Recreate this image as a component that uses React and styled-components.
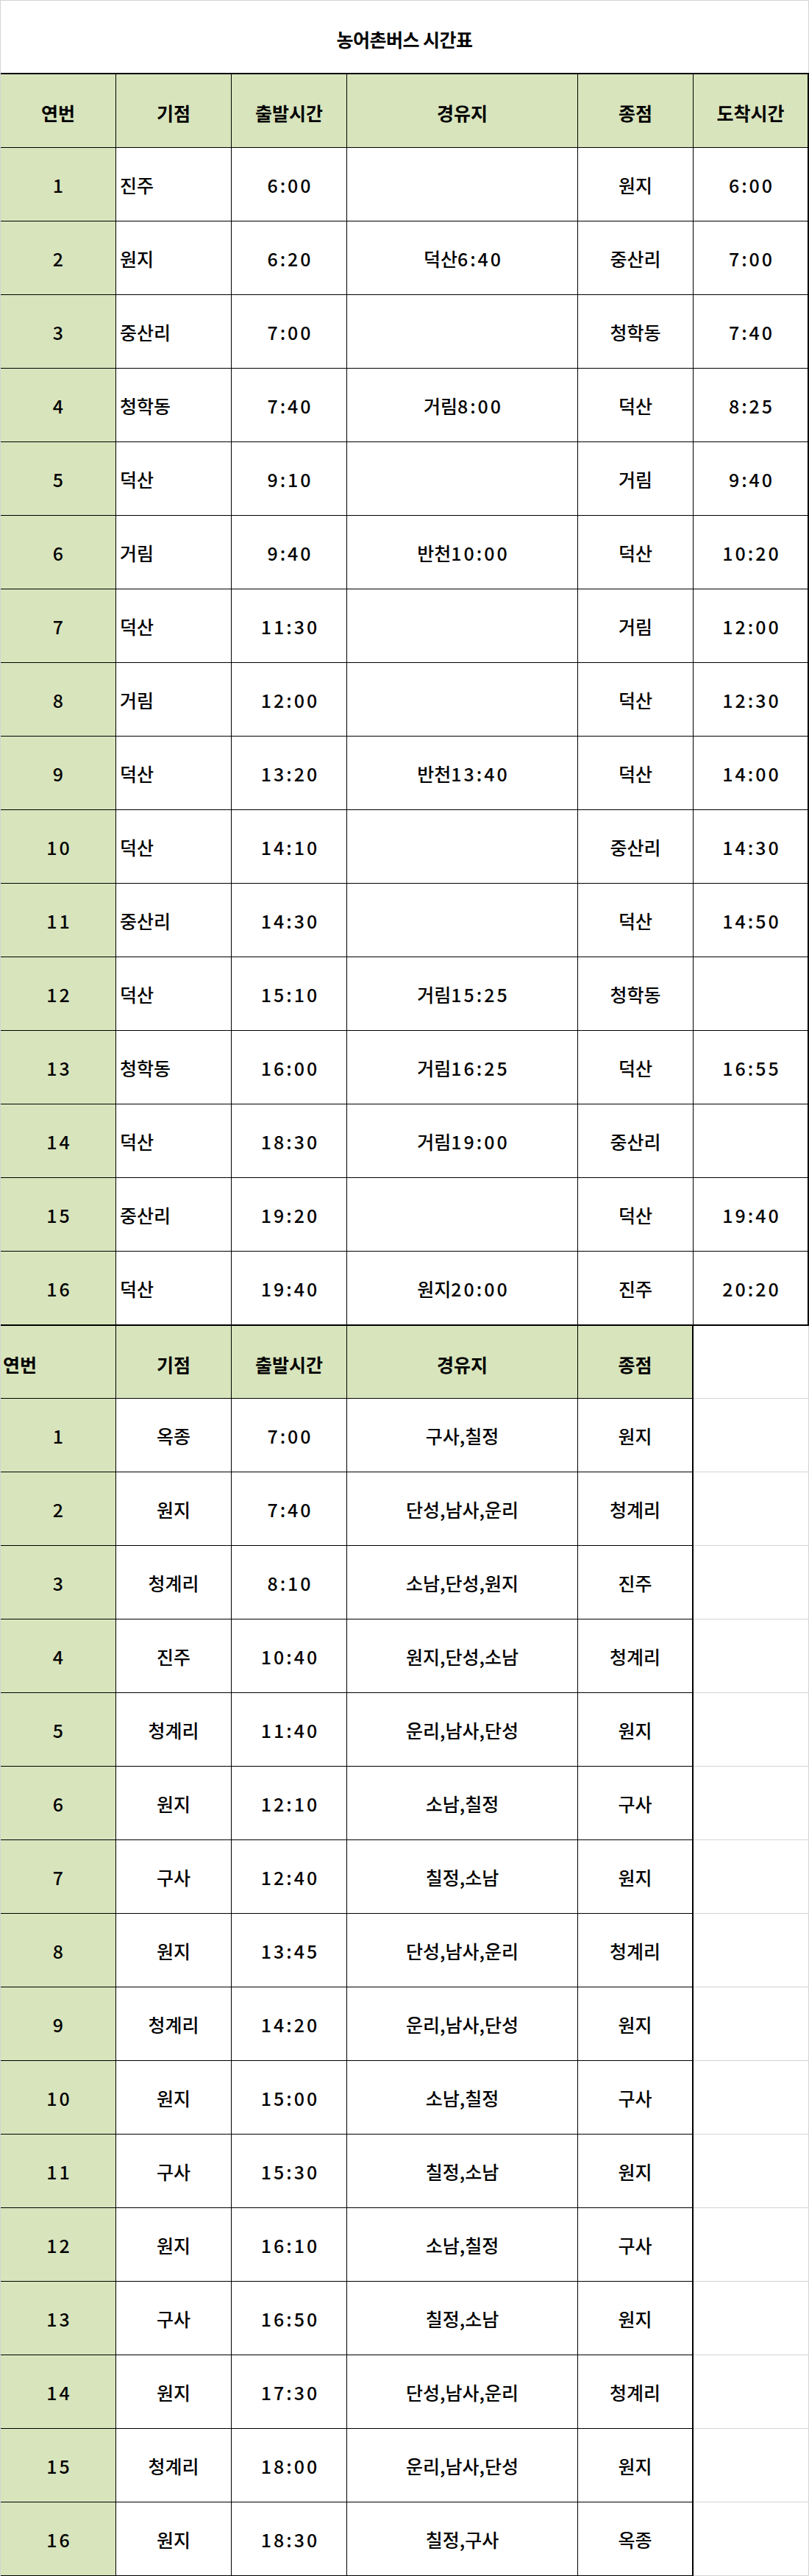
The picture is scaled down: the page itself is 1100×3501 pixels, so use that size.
import styled, { createGlobalStyle } from "styled-components";

const GlobalStyle = createGlobalStyle`
  html, body {
    margin: 0;
    padding: 0;
    background: #fff;
  }
  body {
    font-family: "Noto Sans CJK KR", "Noto Sans", sans-serif;
    color: #000;
  }
  * {
    box-sizing: border-box;
  }
`;

const GRID = "#d4d4d4";
const GREEN = "#d8e4bc";

const firstHead = ["연번", "기점", "출발시간", "경유지", "종점", "도착시간"];
const secondHead = ["연번", "기점", "출발시간", "경유지", "종점"];

const firstRows = [
  ["진주", "6:00", "", "원지", "6:00"],
  ["원지", "6:20", "덕산6:40", "중산리", "7:00"],
  ["중산리", "7:00", "", "청학동", "7:40"],
  ["청학동", "7:40", "거림8:00", "덕산", "8:25"],
  ["덕산", "9:10", "", "거림", "9:40"],
  ["거림", "9:40", "반천10:00", "덕산", "10:20"],
  ["덕산", "11:30", "", "거림", "12:00"],
  ["거림", "12:00", "", "덕산", "12:30"],
  ["덕산", "13:20", "반천13:40", "덕산", "14:00"],
  ["덕산", "14:10", "", "중산리", "14:30"],
  ["중산리", "14:30", "", "덕산", "14:50"],
  ["덕산", "15:10", "거림15:25", "청학동", ""],
  ["청학동", "16:00", "거림16:25", "덕산", "16:55"],
  ["덕산", "18:30", "거림19:00", "중산리", ""],
  ["중산리", "19:20", "", "덕산", "19:40"],
  ["덕산", "19:40", "원지20:00", "진주", "20:20"],
];

const secondRows = [
  ["옥종", "7:00", "구사,칠정", "원지"],
  ["원지", "7:40", "단성,남사,운리", "청계리"],
  ["청계리", "8:10", "소남,단성,원지", "진주"],
  ["진주", "10:40", "원지,단성,소남", "청계리"],
  ["청계리", "11:40", "운리,남사,단성", "원지"],
  ["원지", "12:10", "소남,칠정", "구사"],
  ["구사", "12:40", "칠정,소남", "원지"],
  ["원지", "13:45", "단성,남사,운리", "청계리"],
  ["청계리", "14:20", "운리,남사,단성", "원지"],
  ["원지", "15:00", "소남,칠정", "구사"],
  ["구사", "15:30", "칠정,소남", "원지"],
  ["원지", "16:10", "소남,칠정", "구사"],
  ["구사", "16:50", "칠정,소남", "원지"],
  ["원지", "17:30", "단성,남사,운리", "청계리"],
  ["청계리", "18:00", "운리,남사,단성", "원지"],
  ["원지", "18:30", "칠정,구사", "옥종"],
];

// digits in the sheet font run wider than Noto's, so space them out a bit
function withNumbers(text) {
  return String(text)
    .split(/(\d[\d:]*)/)
    .filter(Boolean)
    .map((part, i) =>
      /^\d/.test(part) ? <Num key={i}>{part}</Num> : <span key={i}>{part}</span>
    );
}

function App() {
  return (
    <>
      <GlobalStyle />
      <Sheet>
        <Title>농어촌버스 시간표</Title>

        <Grid>
          {firstHead.map((h, i) => (
            <Cell key={h} $head $topThick $rightThick={i === 5}>
              {h}
            </Cell>
          ))}
          {firstRows.map((row, r) => {
            const last = r === firstRows.length - 1;
            return [
              <Cell key={`n${r}`} $green $bottomThick={last}>
                {withNumbers(r + 1)}
              </Cell>,
              ...row.map((v, c) => (
                <Cell
                  key={`${r}-${c}`}
                  $align={c === 0 ? "left" : "center"}
                  $rightThick={c === 4}
                  $bottomThick={last}
                >
                  {withNumbers(v)}
                </Cell>
              )),
            ];
          })}
        </Grid>

        <Grid>
          {secondHead.map((h, i) => (
            <Cell
              key={h}
              $head
              $short
              $align={i === 0 ? "flush" : "center"}
              $rightThick={i === 4}
            >
              {h}
            </Cell>
          ))}
          <Blank $short />
          {secondRows.map((row, r) => {
            const last = r === secondRows.length - 1;
            return [
              <Cell key={`n${r}`} $green $bottomThick={last}>
                {withNumbers(r + 1)}
              </Cell>,
              ...row.map((v, c) => (
                <Cell key={`${r}-${c}`} $rightThick={c === 3} $bottomThick={last}>
                  {withNumbers(v)}
                </Cell>
              )),
              <Blank key={`b${r}`} />,
            ];
          })}
        </Grid>
      </Sheet>
    </>
  );
}

const Sheet = styled.div`
  width: 1100px;
  border-left: 1px solid ${GRID};
  border-top: 1px solid ${GRID};
`;

const Title = styled.div`
  height: 98px;
  display: flex;
  align-items: center;
  justify-content: center;
  padding-top: 6px;
  border-right: 1px solid ${GRID};
  font-size: 25px;
  font-weight: 700;
  letter-spacing: -0.5px;
`;

const Grid = styled.div`
  display: grid;
  grid-template-columns: 157px 157px 157px 314px 157px 157px;
`;

const Cell = styled.div`
  height: ${(p) => (p.$topThick ? 102 : p.$bottomThick ? 101 : p.$short ? 99 : 100)}px;
  display: flex;
  align-items: center;
  justify-content: ${(p) => (p.$align === "left" || p.$align === "flush" ? "flex-start" : "center")};
  padding-left: ${(p) => (p.$align === "left" ? 5 : p.$align === "flush" ? 3 : 0)}px;
  padding-top: ${(p) => (p.$head ? 5 : 1)}px;
  background: ${(p) => (p.$head || p.$green ? GREEN : "#fff")};
  border-top: ${(p) => (p.$topThick ? "2px solid #000" : "none")};
  border-right: ${(p) => (p.$rightThick ? 2 : 1)}px solid #000;
  border-bottom: ${(p) => (p.$bottomThick ? 2 : 1)}px solid #000;
  font-size: 25px;
  font-weight: ${(p) => (p.$head ? 700 : 500)};
  white-space: nowrap;
`;

const Blank = styled.div`
  height: ${(p) => (p.$short ? 99 : 100)}px;
  background: #fff;
  border-right: 1px solid ${GRID};
  border-bottom: 1px solid ${GRID};
`;

const Num = styled.span`
  letter-spacing: 3px;
  margin-right: -3px;
`;

export default App;
